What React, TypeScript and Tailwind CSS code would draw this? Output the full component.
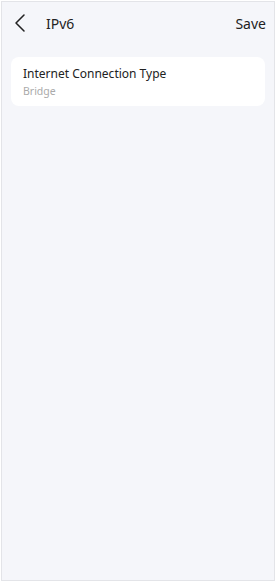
import { ChevronLeft } from 'lucide-react'

export default function App() {
  return (
    <div className="w-[277px] h-[584px] bg-white p-px pb-[3px] font-['Noto_Sans',sans-serif]">
      <div className="h-full w-[274px] border border-[#e3e4e8] bg-[#f5f6fa] flex flex-col">
        {/* Header */}
        <div className="flex items-center h-[42px] pl-[2px] pr-[8px]">
          <ChevronLeft className="w-[32px] h-[32px] text-[#222]" strokeWidth={1.15} />
          <span className="ml-[10px] text-[14px] text-[#222]">IPv6</span>
          <span className="ml-auto text-[14px] text-[#222]">Save</span>
        </div>

        {/* Card */}
        <div className="mx-[9px] mt-[13px] rounded-[8px] bg-white px-[12px] pt-[8px] pb-[7px]">
          <div className="text-[12px] leading-[18px] text-[#222]">Internet Connection Type</div>
          <div className="text-[10.5px] leading-[16px] text-[#aaa]">Bridge</div>
        </div>
      </div>
    </div>
  )
}
